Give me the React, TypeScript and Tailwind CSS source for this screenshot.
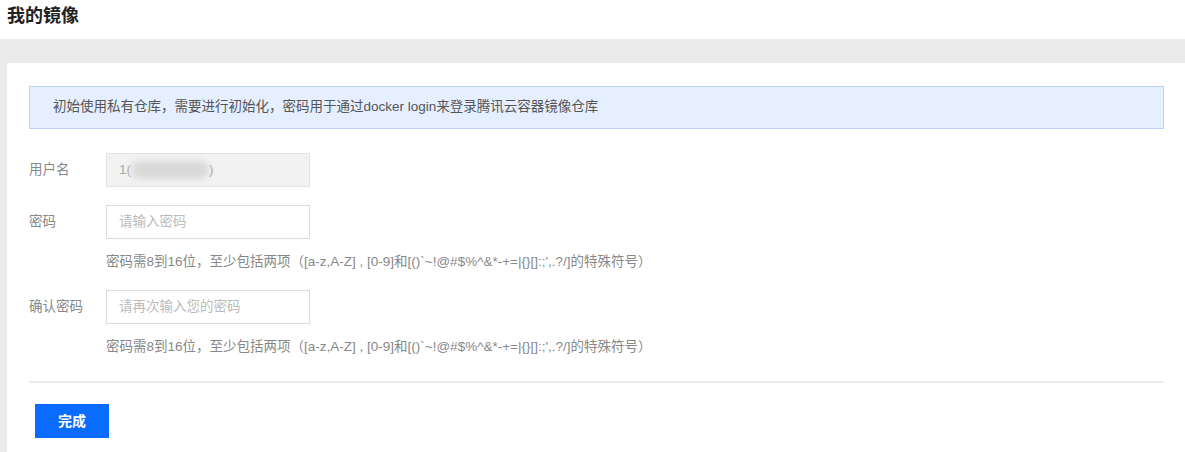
import React from "react";

const font = { fontFamily: '"Liberation Sans", "Noto Sans CJK SC", sans-serif' };

const rule = "密码需8到16位，至少包括两项（[a-z,A-Z] , [0-9]和[()`~!@#$%^&*-+=|{}[]:;',.?/]的特殊符号）";

function Row({ label, children }: { label: string; children: React.ReactNode }) {
  return (
    <div className="flex items-start">
      <div className="w-[77px] shrink-0 h-[34px] flex items-center text-[#888888]">{label}</div>
      <div className="flex flex-col">{children}</div>
    </div>
  );
}

export default function App() {
  return (
    <div className="w-[1185px] h-[452px] bg-white overflow-hidden text-[13.5px]" style={font}>
      <div className="h-[39px] pl-[7px] pb-[6px] flex items-center">
        <h1 className="text-[18px] font-bold text-[#222]">我的镜像</h1>
      </div>
      <div className="bg-[#ebebeb] pt-[24px] pl-[7px] h-[413px]">
        <div className="bg-white h-full pl-[22px] pr-[21px] pt-[23px]">
          <div className="h-[43px] border border-[#b9d3fb] bg-[#e6efff] flex items-center pl-[23px] text-[#555]">
            初始使用私有仓库，需要进行初始化，密码用于通过docker login来登录腾讯云容器镜像仓库
          </div>

          <div className="pt-[24px] flex flex-col gap-[18px]">
            <Row label="用户名">
              <div className="w-[204px] h-[34px] bg-[#f2f2f2] border border-[#e3e3e3] flex items-center pl-[12px] text-[#aaa]">
                <span>1(</span>
                <span className="w-[78px] h-[18px] bg-[#d9d9d9] rounded-full blur-[3px]" />
                <span>)</span>
              </div>
            </Row>

            <Row label="密码">
              <div className="w-[204px] h-[34px] bg-white border border-[#dcdcdc] flex items-center pl-[12px] text-[#bbbbbb]">
                请输入密码
              </div>
              <div className="mt-[13px] leading-[20px] text-[#888]">{rule}</div>
            </Row>

            <Row label="确认密码">
              <div className="w-[204px] h-[34px] bg-white border border-[#dcdcdc] flex items-center pl-[12px] text-[#bbbbbb]">
                请再次输入您的密码
              </div>
              <div className="mt-[13px] leading-[20px] text-[#888]">{rule}</div>
            </Row>
          </div>

          <div className="mt-[24px] h-[2px] bg-[#ececec]" />

          <button className="mt-[21px] ml-[6px] w-[74px] h-[34px] bg-[#0a6cff] text-white font-bold text-[14px]">
            完成
          </button>
        </div>
      </div>
    </div>
  );
}
